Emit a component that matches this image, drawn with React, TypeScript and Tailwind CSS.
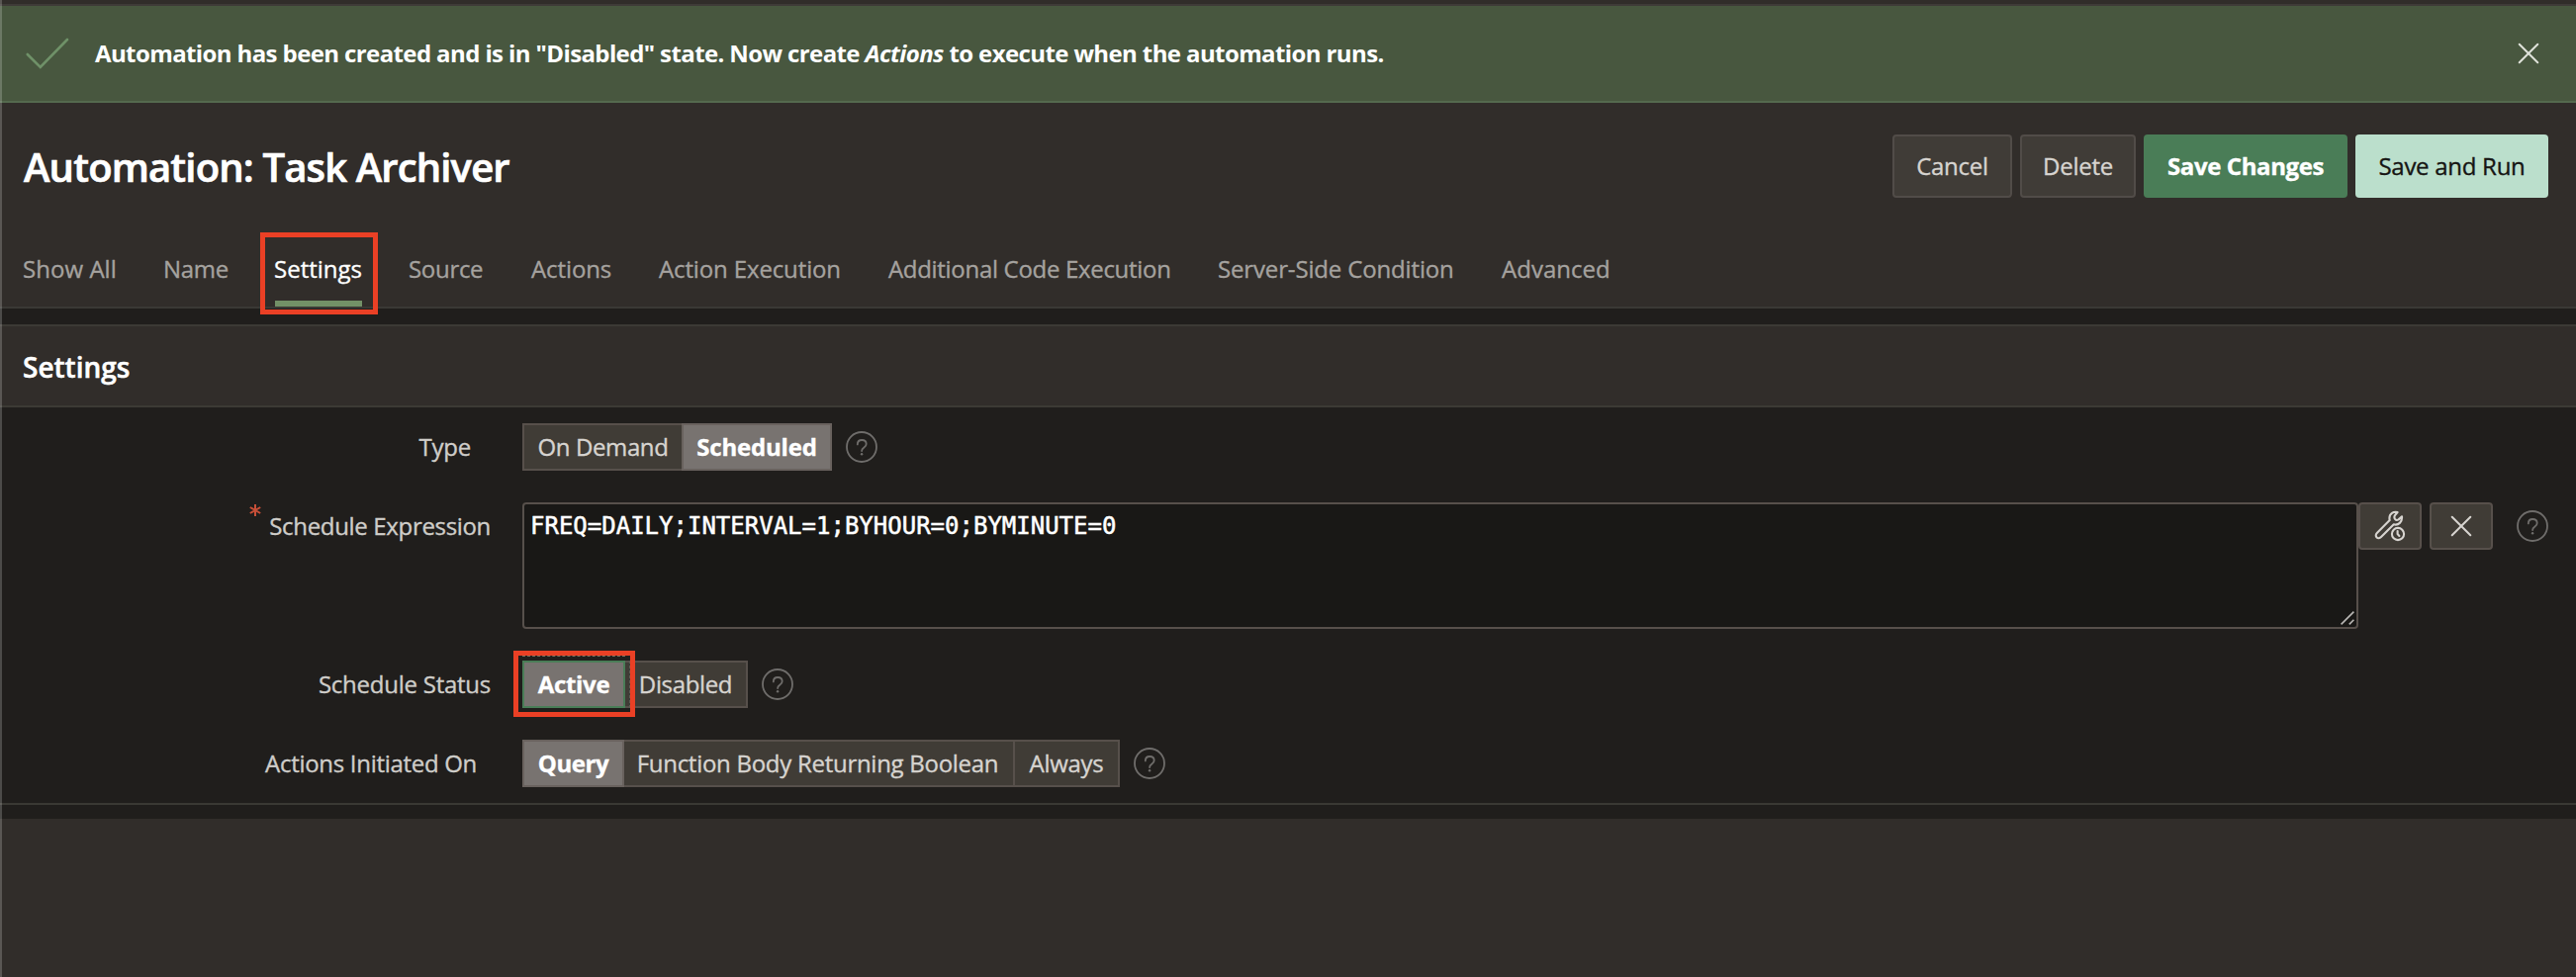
import type { ReactNode } from "react";

const tabs = [
  { label: "Show All", cls: "w-[142px] tracking-[0.05px]" },
  { label: "Name", cls: "w-[112px] tracking-[-0.3px]" },
  { label: "Settings", cls: "w-[136px] tracking-[0px]", active: true },
  { label: "Source", cls: "w-[124px] tracking-[-0.3px]" },
  { label: "Actions", cls: "w-[129px] tracking-[-0.1px]" },
  { label: "Action Execution", cls: "w-[232px] tracking-[-0.13px]" },
  { label: "Additional Code Execution", cls: "w-[333px] tracking-[-0.31px]" },
  { label: "Server-Side Condition", cls: "w-[287px] tracking-[-0.15px]" },
  { label: "Advanced", cls: "w-[120px] tracking-[0.02px]" },
];

function HelpIcon({ className = "" }: { className?: string }) {
  return (
    <svg className={`h-8 w-8 shrink-0 text-[#6f6d6b] ${className}`} viewBox="0 0 32 32" fill="none" stroke="currentColor">
      <circle cx="16" cy="16" r="15" strokeWidth="1.8" />
      <path d="M11.8 13.4 C11.8 10.6 13.6 9 16.2 9 C18.8 9 20.7 10.6 20.7 13 C20.7 15 19.6 15.9 18.2 16.8 C16.8 17.7 16.1 18.3 16.1 20" strokeWidth="1.8" strokeLinecap="round" />
      <circle cx="16.1" cy="23.3" r="1.2" fill="currentColor" stroke="none" />
    </svg>
  );
}

function CloseIcon({ className = "" }: { className?: string }) {
  return (
    <svg className={className} viewBox="0 0 22 22" fill="none" stroke="currentColor" strokeWidth="2" strokeLinecap="round">
      <path d="M1.7 1.7 L20.3 20.3 M20.3 1.7 L1.7 20.3" />
    </svg>
  );
}

function ScheduleWrenchIcon() {
  return (
    <svg className="h-8 w-8" viewBox="0 0 32 32" fill="none" stroke="currentColor" strokeWidth="2.1" strokeLinejoin="round" strokeLinecap="round">
      <path d="M23.6 2 C19.6 0.8 15.4 3.6 15.4 8 C15.4 8.8 15.5 9.5 15.7 10.1 L2.8 23 C1.4 24.4 1.4 26.2 2.6 27.4 C3.8 28.6 5.6 28.5 7 27.1 L19.8 14.3 C24.4 15.6 28.6 11.8 28 6.4 L24.6 9.4 C23.4 10.2 21.8 9.9 21 8.9 C20.2 7.8 20.2 6.4 21 5.2 Z" />
      <circle cx="24" cy="24" r="6.1" />
      <path d="M23.6 21 V24 L25.4 26" />
    </svg>
  );
}

function Label({ children, className }: { children: ReactNode; className: string }) {
  return <label className={`relative flex h-12 w-[528px] shrink-0 items-center justify-end text-[#cfcdc9] ${className}`}>{children}</label>;
}

const off = "border-[#57504b] bg-[#403c36] text-[#d7d4d0]";
const on = "z-10 border-[#69625e] bg-[#787370] font-bold text-white";

function Segment({ children, className }: { children: ReactNode; className: string }) {
  return <button className={`relative flex h-12 shrink-0 items-center justify-center whitespace-nowrap border-2 ${className}`}>{children}</button>;
}

export default function App() {
  return (
    <div className="relative flex h-[988px] w-[2604px] flex-col overflow-hidden bg-[#312d2a] font-['Open_Sans',sans-serif] text-[24px] leading-8 text-[#d7d4d0] [-webkit-text-stroke:0.35px_currentColor]">
      <div className="h-1.5 shrink-0 border-b-2 border-[#3f3b38]" />
      <div className="flex h-[98px] shrink-0 items-center justify-between border-b-2 border-[#54694e] bg-[#48573f] pl-[26px] pr-[37px]">
        <div className="flex items-center">
          <svg className="h-8 w-11" viewBox="0 0 44 32" fill="none" stroke="#6f9168" strokeWidth="2.6" strokeLinecap="round">
            <path d="M1.8 17 L14.8 30 L42 2" />
          </svg>
          <p className="ml-[26px] whitespace-nowrap font-bold tracking-[-0.61px] text-white [-webkit-text-stroke:0px]">
            Automation has been created and is in "Disabled" state. Now create <em>Actions</em> to execute when the automation runs.
          </p>
        </div>
        <CloseIcon className="h-[22px] w-[22px] text-[#dfe2da]" />
      </div>

      <div className="flex h-[208px] shrink-0 flex-col border-b-2 border-[#3a3935]">
        <div className="flex h-[128px] items-center justify-between pl-6 pr-7">
          <h1 className="whitespace-nowrap pt-0.5 text-[40px] font-semibold leading-[48px] tracking-[-0.85px] text-white [-webkit-text-stroke:0.7px_white]">Automation: Task Archiver</h1>
          <div className="flex gap-2">
            <button className="h-16 w-[121px] rounded-[4px] border-2 border-[#514c48] bg-[#403c37] tracking-[-0.25px]">Cancel</button>
            <button className="h-16 w-[117px] rounded-[4px] border-2 border-[#514c48] bg-[#403c37] tracking-[-0.25px]">Delete</button>
            <button className="h-16 w-[206px] rounded-[4px] bg-[#4a7d57] font-bold tracking-[-0.4px] text-white">Save Changes</button>
            <button className="h-16 w-[195px] rounded-[4px] bg-[#bbdfcc] tracking-[-0.28px] text-[#161513]">Save and Run</button>
          </div>
        </div>
        <nav className="flex h-[78px] pl-[23px]">
          {tabs.map((t) => (
            <a key={t.label} className={`relative h-full shrink-0 whitespace-nowrap pt-6 ${t.active ? "text-white" : "text-[#a5a29f]"} ${t.cls}`}>
              {t.label}
              {t.active && (
                <>
                  <span className="absolute bottom-0 left-px h-1.5 w-[88px] bg-[#739167]" />
                  <span className="absolute -left-[14px] top-[3px] h-[83px] w-[119px] border-[5px] border-[#ea4025]" />
                </>
              )}
            </a>
          ))}
        </nav>
      </div>

      <div className="h-4 shrink-0 bg-[#201e1c]" />
      <div className="flex h-[84px] shrink-0 items-center border-y-2 border-[#3c3a35] pl-[23px]">
        <h2 className="pt-px text-[28px] font-semibold leading-10 text-white [-webkit-text-stroke:0.5px_white]">Settings</h2>
      </div>

      <div className="flex h-[402px] shrink-0 flex-col gap-8 border-b-2 border-[#3a3934] bg-[#201e1c] pt-4">
        <div className="flex items-center">
          <Label className="pr-[52px] tracking-[-0.2px]">Type</Label>
          <Segment className={`w-[163px] tracking-[-0.4px] ${off}`}>On Demand</Segment>
          <Segment className={`-ml-0.5 w-[152px] tracking-[-0.2px] ${on}`}>Scheduled</Segment>
          <HelpIcon className="ml-3.5" />
        </div>

        <div className="flex h-32 items-start">
          <Label className="pr-8 tracking-[-0.33px]">
            <svg className="absolute left-[252px] top-0.5 h-3 w-3" viewBox="0 0 12 12" stroke="#c74f38" strokeWidth="2">
              <path d="M6 0 V12 M0.8 3 L11.2 9 M11.2 3 L0.8 9" />
            </svg>
            Schedule Expression
          </Label>
          <div className="relative h-32 w-[1856px] shrink-0 rounded-[4px] border-2 border-[#57504b] bg-[#191816] pl-1.5 pt-1.5 font-['DejaVu_Sans_Mono',monospace] text-[24px] text-white [-webkit-text-stroke:0.5px_white]">
            FREQ=DAILY;INTERVAL=1;BYHOUR=0;BYMINUTE=0
            <svg className="absolute bottom-0.5 right-0.5 h-3.5 w-3.5" viewBox="0 0 14 14" stroke="#b9b7b4" strokeWidth="1.6">
              <path d="M0.6 13.4 L13.4 0.6 M8.8 13.4 L13.4 8.8" />
            </svg>
          </div>
          <button className="flex h-12 w-16 items-center justify-center rounded-[4px] border-2 border-[#57504b] bg-[#403c36]">
            <ScheduleWrenchIcon />
          </button>
          <button className="ml-2 flex h-12 w-16 items-center justify-center rounded-[4px] border-2 border-[#57504b] bg-[#403c36]">
            <CloseIcon className="h-[22px] w-[22px]" />
          </button>
          <HelpIcon className="ml-6 mt-2" />
        </div>

        <div className="flex items-center">
          <Label className="pr-8 tracking-[-0.25px]">Schedule Status</Label>
          <div className="relative flex">
            <Segment className="z-10 w-[104px] border-[#4a7d57] bg-[#787370] font-bold tracking-[-0.3px] text-white">Active</Segment>
            <Segment className={`-ml-0.5 w-[126px] tracking-[-0.35px] ${off}`}>Disabled</Segment>
            <span className="absolute -top-[5px] left-0 h-px w-[104px] border-t border-dashed border-[#77735f]" />
            <span className="absolute left-[108px] top-0 h-12 w-px border-l border-dashed border-[#5f5b50]" />
            <span className="absolute -left-[9px] -top-2.5 z-20 h-[67px] w-[123px] border-[5px] border-[#ea4025]" />
          </div>
          <HelpIcon className="ml-3.5" />
        </div>

        <div className="flex items-center">
          <Label className="pr-[46px] tracking-[-0.3px]">Actions Initiated On</Label>
          <Segment className={`w-[103px] tracking-[-0.4px] ${on}`}>Query</Segment>
          <Segment className={`-ml-0.5 w-[397px] pr-0.5 tracking-[-0.28px] ${off}`}>Function Body Returning Boolean</Segment>
          <Segment className={`-ml-0.5 w-[108px] tracking-[-0.3px] ${off}`}>Always</Segment>
          <HelpIcon className="ml-3.5" />
        </div>
      </div>
      <div className="h-3.5 shrink-0 bg-[#201e1c]" />
      <div className="pointer-events-none absolute inset-y-0 left-0 w-0.5 bg-white/20" />
    </div>
  );
}
